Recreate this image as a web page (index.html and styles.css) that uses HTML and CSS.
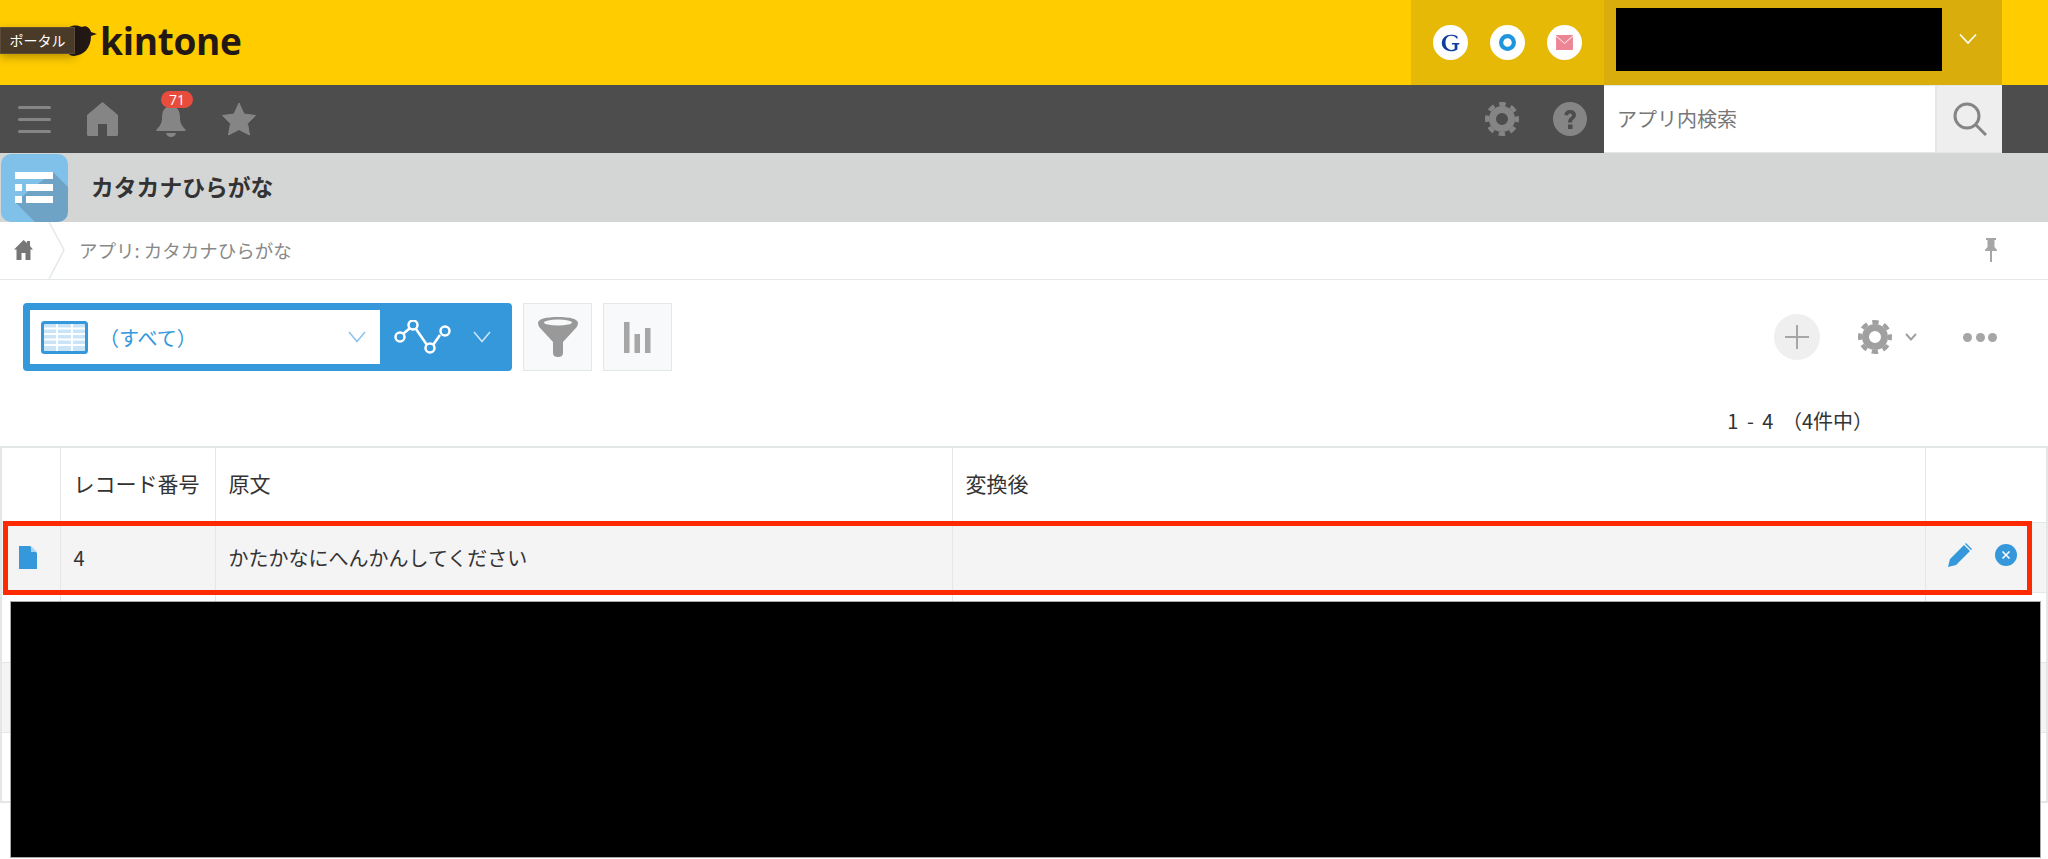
FILE: index.html
```html
<!DOCTYPE html>
<html lang="ja">
<head>
    <meta charset="UTF-8">
    <title>カタカナひらがな - kintone</title>
    <link rel="stylesheet" href="styles.css">
</head>
<body>
    <svg class="defs">
        <defs>
            <symbol id="gear" viewBox="0 0 34 34">
                <circle cx="17" cy="17" r="15" fill="none" stroke="currentColor" stroke-width="4" stroke-dasharray="6.500 5.281" stroke-dashoffset="3.250"/>
                <circle cx="17" cy="17" r="9.500" fill="none" stroke="currentColor" stroke-width="7"/>
            </symbol>
        </defs>
    </svg>

    <div class="page">
        <header class="topbar">
            <div class="logo">
                <svg width="40" height="34" viewBox="0 0 40 34">
                    <path d="M3 9C8 1 16 0 22 3C26 1 30 4 31 8L37 10L31 12C31 24 24 31 14 32C6 32 0 18 3 9Z" fill="#231815"/>
                </svg>
                <span class="logo-name">kintone</span>
            </div>
            <div class="tooltip">ポータル</div>
            <div class="tray">
                <span class="tray-icon">
                    <svg width="22" height="22" viewBox="0 0 24 24"><path d="M19 6V8C17 5 15 4 12 4C8 4 6 7.500 6 11.500C6 16 8.500 19.500 12.500 19.500C14 19.500 15 19 16 18.500V13.500H13V12H21V13.500H19V19C17 20.500 14.500 21 12 21C6 21 2 17 2 12C2 6.500 6.500 3 12 3C14.500 3 16.500 3.500 19 4.500Z" fill="#0f3f9c"/></svg>
                </span>
                <span class="tray-icon">
                    <svg width="17" height="17" viewBox="0 0 20 20"><circle cx="10" cy="10" r="7.500" fill="none" stroke="#1f96dc" stroke-width="5"/></svg>
                </span>
                <span class="tray-icon">
                    <svg width="17" height="15" viewBox="0 0 18 16"><rect width="18" height="16" fill="#ee8595"/><path d="M0 1L9 9L18 1" fill="none" stroke="#fff" stroke-width="1"/></svg>
                </span>
            </div>
            <div class="user">
                <div class="user-name"></div>
                <svg class="user-arrow" width="18" height="12" viewBox="0 0 18 12"><path d="M1 1.500L9 10L17 1.500" fill="none" stroke="#fff" stroke-width="1.600"/></svg>
            </div>
        </header>

        <nav class="navbar">
            <div class="burger"><span></span><span></span><span></span></div>
            <svg class="nav-home" width="31" height="34" viewBox="0 0 31 34"><path d="M15.500 0L31 13V32.500Q31 34 29.500 34H20V22H11V34H1.500Q0 34 0 32.500V13Z" fill="#858585"/></svg>
            <div class="bell">
                <svg width="30" height="33" viewBox="0 0 30 33"><path d="M15 2C22 2 24 8 24 14C24 19 26 22 29.500 25.500V27H.5V25.500C4 22 6 19 6 14C6 8 8 2 15 2ZM10 29H20Q19 33 15 33Q11 33 10 29Z" fill="#858585"/></svg>
                <span class="badge">71</span>
            </div>
            <svg class="nav-star" width="34" height="34" viewBox="0 0 34 34"><path d="M17 1L22 12L33.500 13.500L25.500 21.500L27.500 33L17 27.500L6.500 33L8.500 21.500L.5 13.500L12 12Z" fill="#858585" stroke="#858585" stroke-linejoin="round"/></svg>
            <svg class="nav-gear" width="34" height="34"><use href="#gear"/></svg>
            <svg class="nav-help" width="34" height="34" viewBox="0 0 34 34">
                <circle cx="17" cy="17" r="17" fill="#858585"/>
                <path d="M11.500 13C11.500 9.500 14 8 17 8C20.500 8 23 10 23 13C23 16.500 19 17 19 20.500H15C15 15.500 19 15.500 19 13C19 12 18.200 11.500 17 11.500C15.800 11.500 15 12.200 15 13.500Z" fill="#4d4d4d"/>
                <rect x="15" y="22.500" width="4.500" height="4.500" fill="#4d4d4d"/>
            </svg>
            <div class="search">
                <div class="search-input">アプリ内検索</div>
                <div class="search-btn">
                    <svg width="34" height="34" viewBox="0 0 34 34"><circle cx="14" cy="14" r="12" fill="none" stroke="#858585" stroke-width="3"/><path d="M22.500 22.500L33 33" stroke="#858585" stroke-width="3"/></svg>
                </div>
            </div>
        </nav>

        <div class="titlebar">
            <div class="app-icon">
                <svg width="67" height="68" viewBox="0 0 67 68">
                    <path d="M52 18L67 33V58Q67 68 57 68H34L14 48Z" fill="#6fa3c6"/>
                    <g fill="#fff">
                        <rect x="14" y="18" width="38" height="7"/>
                        <rect x="14" y="30" width="7" height="7"/>
                        <rect x="25" y="30" width="27" height="7"/>
                        <rect x="14" y="42" width="7" height="7"/>
                        <rect x="25" y="42" width="27" height="7"/>
                    </g>
                </svg>
            </div>
            <h1 class="app-title">カタカナひらがな</h1>
        </div>

        <div class="crumbs">
            <svg class="crumb-home" width="19" height="20" viewBox="0 0 19 20"><path d="M9.500 0L13 3V1H16V6L19 9.500H16.500V20H11.500V13H7.500V20H2.500V9.500H0Z" fill="#777"/></svg>
            <svg class="crumb-sep" width="18" height="57" viewBox="0 0 18 57"><path d="M1 0L16 28L1 57" fill="none" stroke="#e3e9e8" stroke-width="1.500"/></svg>
            <span class="crumb-text">アプリ: カタカナひらがな</span>
            <svg class="pin" width="14" height="24" viewBox="0 0 14 24"><path d="M2 0H12V2H10.500V9L13 12V13H8V24H6V13H1V12L3.500 9V2H2Z" fill="#a6a6a6"/></svg>
        </div>

        <div class="toolbar">
            <div class="view-bar">
                <div class="view-select">
                    <svg width="47" height="33" viewBox="0 0 47 33">
                        <rect x="1.500" y="1.500" width="44" height="30" rx="2" fill="#c9e4f7" stroke="#3498db" stroke-width="3"/>
                        <path d="M3 7.500H44M3 13H44M3 18.500H44M3 24H44M16 3V30M31 3V30" stroke="#fff" stroke-width="2"/>
                    </svg>
                    <span class="view-name">（すべて）</span>
                    <svg class="view-arrow" width="18" height="12" viewBox="0 0 18 12"><path d="M1 1L9 10.500L17 1" fill="none" stroke="#8cc4ec" stroke-width="1.500"/></svg>
                </div>
                <svg class="graph-icon" width="57" height="34" viewBox="0 0 57 34">
                    <path d="M9 14L16 8M22 9L33 25M39 25L46 15" stroke="#fff" stroke-width="2.500"/>
                    <g fill="none" stroke="#fff" stroke-width="2.500">
                        <circle cx="6" cy="17" r="4.500"/>
                        <circle cx="19" cy="5" r="4.500"/>
                        <circle cx="36" cy="28" r="4.500"/>
                        <circle cx="51" cy="11" r="4.500"/>
                    </g>
                </svg>
                <svg class="graph-arrow" width="18" height="12" viewBox="0 0 18 12"><path d="M1 1L9 10.500L17 1" fill="none" stroke="#cfe6f7" stroke-width="1.500"/></svg>
            </div>
            <div class="tool-btn">
                <svg width="40" height="40" viewBox="0 0 40 40">
                    <path d="M0 6C0 2 8 0 20 0C32 0 40 2 40 6C40 9 38 11 36 13L25 25V36Q25 40 20 40Q15 40 15 36V25L4 13C2 11 0 9 0 6Z" fill="#999"/>
                    <ellipse cx="20" cy="5.500" rx="14" ry="3" fill="#f7f9fa"/>
                </svg>
            </div>
            <div class="tool-btn">
                <svg width="27" height="31" viewBox="0 0 27 31"><g fill="#a6a6a6"><rect width="5.500" height="31"/><rect x="10.500" y="12" width="5.500" height="19"/><rect x="21" y="6" width="5.500" height="25"/></g></svg>
            </div>
            <div class="tool-right">
                <div class="add-btn">
                    <svg width="24" height="24" viewBox="0 0 24 24"><path d="M12 0V24M0 12H24" stroke="#a6a6a6" stroke-width="2"/></svg>
                </div>
                <svg class="tool-gear" width="34" height="34"><use href="#gear"/></svg>
                <svg class="tool-arrow" width="12" height="8" viewBox="0 0 12 8"><path d="M1 1L6 6.500L11 1" fill="none" stroke="#a0a0a0" stroke-width="2"/></svg>
                <div class="dots"><span></span><span></span><span></span></div>
            </div>
        </div>

        <div class="count">1 - 4 （4件中）</div>

        <table class="records">
            <thead>
                <tr>
                    <th class="col-icon"></th>
                    <th class="col-id">レコード番号</th>
                    <th class="col-src">原文</th>
                    <th class="col-dst">変換後</th>
                    <th class="col-act"></th>
                </tr>
            </thead>
            <tbody>
                <tr class="even">
                    <td class="cell-icon">
                        <svg width="18" height="23" viewBox="0 0 18 23"><path d="M0 0H11L18 7V23H0Z" fill="#3498db"/><path d="M12 0L18 6H12Z" fill="#a9d3f0"/></svg>
                    </td>
                    <td>4</td>
                    <td>かたかなにへんかんしてください</td>
                    <td></td>
                    <td class="cell-act">
                        <svg width="24" height="24" viewBox="0 0 24 24"><path d="M0 24L2 16L16 2L22 8L8 22ZM18 0L24 6L23 7L17 1Z" fill="#3498db"/></svg>
                        <svg width="22" height="22" viewBox="0 0 22 22"><circle cx="11" cy="11" r="11" fill="#3498db"/><path d="M7.500 7.500L14.500 14.500M14.500 7.500L7.500 14.500" stroke="#fff" stroke-width="1.600"/></svg>
                    </td>
                </tr>
                <tr><td></td><td></td><td></td><td></td><td></td></tr>
                <tr class="even"><td></td><td></td><td></td><td></td><td></td></tr>
                <tr><td></td><td></td><td></td><td></td><td></td></tr>
            </tbody>
        </table>

        <!-- highlight and redaction drawn on top of the screenshot -->
        <div class="highlight"></div>
        <div class="redact"></div>
    </div>
</body>
</html>
```

FILE: styles.css
```css
* {
    margin: 0;
    padding: 0;
    box-sizing: border-box;
}
html, body {
    height: 859px;
    overflow: hidden;
}
body {
    font-family: "Noto Sans CJK JP", "Noto Sans", sans-serif;
    background-color: #fff;
    color: #333;
}
svg {
    display: block;
    flex: none;
}
.defs {
    display: none;
}
.page {
    position: relative;
    width: 2048px;
    height: 859px;
}

/* top yellow bar */
.topbar {
    display: flex;
    height: 85px;
    background-color: #ffcc00;
    padding-right: 46px;
}
.logo {
    display: flex;
    align-items: center;
    gap: 0;
    padding: 0 0 4px 60px;
}
.logo-name {
    font-family: "Open Sans", sans-serif;
    font-size: 37px;
    font-weight: 700;
    line-height: 1;
    letter-spacing: -0.3px;
    color: #231815;
}
.tooltip {
    position: absolute;
    left: 0;
    top: 27px;
    width: 75px;
    height: 27px;
    background-color: #4a3a28;
    border: 1px solid #5c4c38;
    color: #fff;
    font-size: 14px;
    line-height: 25px;
    text-align: center;
    box-shadow: 0 3px 10px rgba(0, 0, 0, 0.3);
}
.tray {
    display: flex;
    align-items: center;
    gap: 22px;
    width: 193px;
    margin-left: auto;
    padding-left: 22px;
    background-color: #e6b906;
}
.tray-icon {
    display: flex;
    align-items: center;
    justify-content: center;
    width: 35px;
    height: 35px;
    border-radius: 50%;
    background-color: #fff;
}
.user {
    display: flex;
    width: 398px;
    padding: 8px 0 14px 12px;
    background-color: #d9ae0c;
}
.user-name {
    width: 326px;
    height: 63px;
    background-color: #000;
}
.user-arrow {
    margin: 25px 0 0 17px;
}

/* dark nav bar */
.navbar {
    display: flex;
    align-items: center;
    height: 68px;
    padding: 0 46px 0 18px;
    background-color: #4d4d4d;
}
.burger {
    display: flex;
    flex-direction: column;
    gap: 9px;
    width: 33px;
}
.burger span {
    height: 3px;
    border-radius: 2px;
    background-color: #858585;
}
.nav-home {
    margin-left: 36px;
}
.bell {
    position: relative;
    margin-left: 38px;
    padding-top: 3px;
}
.badge {
    position: absolute;
    left: 5px;
    top: -10px;
    width: 32px;
    height: 17px;
    border-radius: 9px;
    background-color: #e74c3c;
    color: #fff;
    font-family: "Open Sans", sans-serif;
    font-size: 14px;
    line-height: 17px;
    text-align: center;
}
.nav-star {
    margin-left: 36px;
}
.nav-gear {
    margin-left: auto;
    color: #858585;
}
.nav-help {
    margin-left: 34px;
}
.search {
    display: flex;
    width: 398px;
    height: 68px;
    margin-left: 17px;
    border: 1px solid #e3e7e8;
    border-width: 1px 0;
}
.search-input {
    flex: 1;
    padding-left: 13px;
    background-color: #fff;
    color: #777;
    font-size: 20px;
    line-height: 66px;
}
.search-btn {
    display: flex;
    align-items: center;
    justify-content: center;
    width: 67px;
    background-color: #eee;
    border-left: 2px solid #e3e7e8;
}

/* app title */
.titlebar {
    display: flex;
    align-items: center;
    height: 69px;
    padding-left: 1px;
    background-color: #d4d6d5;
}
.app-icon {
    width: 67px;
    height: 68px;
    margin-top: 1px;
    border-radius: 10px;
    overflow: hidden;
    background-color: #7fc1e8;
}
.app-title {
    margin: 0 0 3px 23px;
    font-size: 22.800px;
    font-weight: 700;
    color: #333;
}

/* breadcrumb */
.crumbs {
    display: flex;
    align-items: center;
    height: 58px;
    padding: 0 50px 1px 14px;
    border-bottom: 1px solid #e3e7e8;
}
.crumb-sep {
    margin-left: 15px;
}
.crumb-text {
    margin-left: 13px;
    font-size: 18.500px;
    color: #888;
}
.pin {
    margin-left: auto;
}

/* toolbar */
.toolbar {
    display: flex;
    gap: 11px;
    height: 68px;
    margin-top: 23px;
    padding: 0 51px 0 23px;
}
.view-bar {
    display: flex;
    align-items: center;
    width: 489px;
    padding: 0 21px 0 7px;
    border-radius: 4px;
    background-color: #3498db;
}
.view-select {
    display: flex;
    align-items: center;
    width: 350px;
    height: 54px;
    padding: 0 14px 0 11px;
    background-color: #fff;
}
.view-name {
    margin-left: 11px;
    font-size: 20px;
    color: #3498db;
}
.view-arrow {
    margin-left: auto;
}
.graph-icon {
    margin-left: 14px;
}
.graph-arrow {
    margin-left: auto;
}
.tool-btn {
    display: flex;
    align-items: center;
    justify-content: center;
    width: 69px;
    border: 1px solid #e3e7e8;
    background-color: #f7f9fa;
}
.tool-right {
    display: flex;
    align-items: center;
    margin-left: auto;
}
.add-btn {
    display: flex;
    align-items: center;
    justify-content: center;
    width: 46px;
    height: 46px;
    border-radius: 50%;
    background-color: #efefef;
}
.tool-gear {
    margin-left: 38px;
    color: #a0a0a0;
}
.tool-arrow {
    margin-left: 13px;
}
.dots {
    display: flex;
    gap: 3.5px;
    margin-left: 46px;
}
.dots span {
    width: 9px;
    height: 9px;
    border-radius: 50%;
    background-color: #a6a6a6;
}

/* record list */
.count {
    height: 75px;
    padding: 35px 175px 0 0;
    font-size: 20px;
    line-height: 30px;
    word-spacing: 4px;
    text-align: right;
    color: #333;
}
.records {
    width: 2048px;
    table-layout: fixed;
    border-collapse: collapse;
    border: 2px solid #e3e7e8;
    font-size: 20px;
}
.records th, .records td {
    padding: 0 10px 0 13px;
    border-right: 1px solid #e3e7e8;
    border-bottom: 1px solid #e3e7e8;
    text-align: left;
    color: #333;
}
.records th {
    height: 75px;
    padding-bottom: 3px;
    font-size: 21px;
    font-weight: 400;
}
.records td {
    height: 70px;
}
.records .even td {
    background-color: #f4f4f4;
}
.col-icon {
    width: 59px;
}
.col-id {
    width: 155px;
}
.col-src {
    width: 737px;
}
.col-dst {
    width: 973px;
}
.records .cell-icon {
    padding-left: 17px;
}
.records .cell-act svg {
    display: inline-block;
    vertical-align: middle;
}
.records .cell-act svg + svg {
    margin-left: 19px;
}
.records .cell-act {
    padding: 0 0 9px 22px;
}

/* overlays */
.highlight {
    position: absolute;
    left: 3px;
    top: 521px;
    width: 2029px;
    height: 74px;
    border: 5px solid #ff2a00;
}
.redact {
    position: absolute;
    left: 11px;
    top: 602px;
    width: 2029px;
    height: 255px;
    background-color: #000;
    box-shadow: 0 0 0 1px #aaa;
}
```
